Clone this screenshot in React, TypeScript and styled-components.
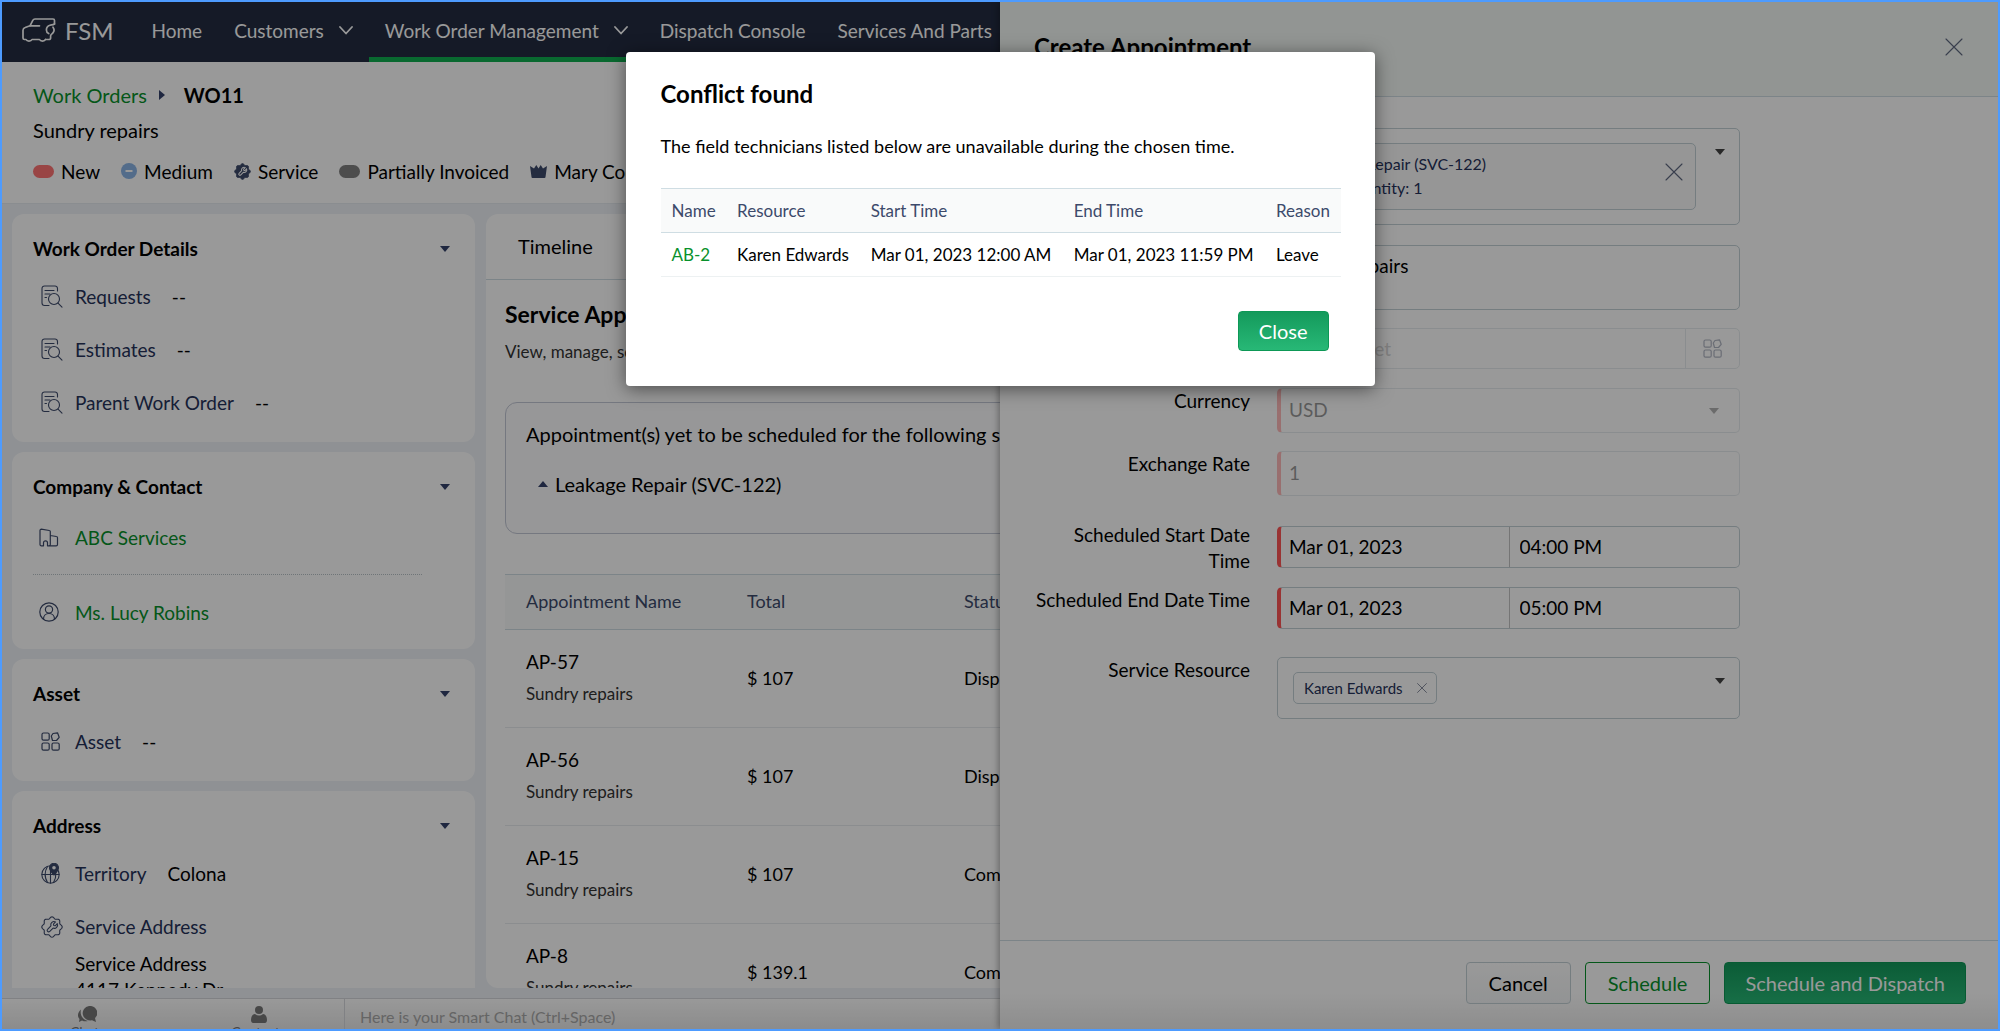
import React from "react";
import styled, { createGlobalStyle } from "styled-components";

const c = {
  ink: "#000",
  navy: "#26325a",
  slate: "#3d4a6b",
  green: "#08912b",
  line: "#cfdde3",
  white: "#fff",
};

const Global = createGlobalStyle`
  * { box-sizing: border-box; }
  body { margin: 0; font-family: Lato, "Liberation Sans", sans-serif; font-size: 19px; color: ${c.ink}; }
  button, input, select, textarea { font: inherit; color: inherit; margin: 0; }
  h1, h2, h3, p { margin: 0; }
  a { text-decoration: none; color: ${c.green}; }
`;

const Shell = styled.div`
  position: relative;
  display: flex;
  flex-direction: column;
  height: 100vh;
  overflow: hidden;
  border: 2px solid #4d9bff;
  background: #eef2f7;
`;

/* ---------- top navigation ---------- */
const Nav = styled.nav`
  display: flex;
  flex: none;
  height: 60px;
  background: #232c42;
  color: ${c.white};
  white-space: nowrap;
`;
const Brand = styled.div`
  display: flex;
  align-items: center;
  gap: 9px;
  padding: 0 22px 4px 20px;
  font-size: 24px;
`;
const NavItem = styled.a<{ $active?: boolean }>`
  display: flex;
  align-items: center;
  gap: 15px;
  padding: 0 16px 4px;
  font-size: 19px;
  color: ${c.white};
  box-shadow: ${(p) => (p.$active ? "inset 0 -5px 0 #10b050" : "none")};
`;

/* ---------- record header ---------- */
const RecordHeader = styled.header`
  flex: none;
  height: 142px;
  padding: 19px 31px 0;
  background: ${c.white};
  border-bottom: 1px solid #e6ebf1;
`;
const Crumbs = styled.div`
  display: flex;
  align-items: center;
  gap: 12px;
  height: 28px;
  font-size: 20px;
`;
const CrumbTitle = styled.h1`
  padding-left: 7px;
  font-size: 20px;
  font-weight: 700;
`;
const Summary = styled.p`
  height: 43px;
  font-size: 20px;
  line-height: 43px;
`;
const Statuses = styled.div`
  display: flex;
  align-items: center;
  gap: 21px;
  height: 38px;
  font-size: 19px;
  white-space: nowrap;
`;
const Status = styled.span`
  display: flex;
  align-items: center;
  gap: 7px;
`;
const Pill = styled.i<{ $color: string }>`
  width: 21px;
  height: 13px;
  border-radius: 7px;
  background: ${(p) => p.$color};
`;

/* ---------- body ---------- */
const Body = styled.main`
  display: flex;
  flex: 1;
  gap: 11px;
  min-height: 0;
  padding: 10px;
  overflow: hidden;
`;
const Side = styled.aside`
  display: flex;
  flex: 0 0 463px;
  flex-direction: column;
  gap: 10px;
  overflow: hidden;
`;
const Card = styled.section<{ $bottom?: number }>`
  flex: none;
  padding: 14px 21px ${(p) => p.$bottom ?? 13}px;
  border-radius: 12px;
  background: ${c.white};
`;
const CardHead = styled.div`
  display: flex;
  align-items: center;
  justify-content: space-between;
  height: 42px;
  padding-right: 4px;
`;
const CardTitle = styled.h2`
  font-size: 19px;
  font-weight: 700;
  line-height: 24px;
`;
const Row = styled.div<{ $h?: number }>`
  display: flex;
  align-items: center;
  height: ${(p) => p.$h ?? 53}px;
`;
const RowIcon = styled.span<{ $inset?: number }>`
  display: flex;
  align-items: center;
  flex: 0 0 42px;
  height: 26px;
  padding-left: ${(p) => p.$inset ?? 8}px;
`;
const RowLabel = styled.span`
  padding-right: 21px;
  color: ${c.navy};
`;
const Dotted = styled.hr`
  width: 389px;
  max-width: 100%;
  height: 0;
  margin: 8px 0;
  border: 0;
  border-top: 1px dotted #b9c4c8;
`;
const AddressRow = styled.div`
  display: flex;
  align-items: flex-start;
  padding-top: 14px;
`;
const AddressText = styled.div`
  line-height: 26px;
`;
const AddressLabel = styled.div`
  padding-bottom: 11px;
  color: ${c.navy};
`;

const Content = styled.section`
  flex: 1;
  min-width: 0;
  overflow: hidden;
  border-radius: 12px;
  background: ${c.white};
`;
const Tabs = styled.div`
  display: flex;
  height: 66px;
  padding: 0 32px;
  border-bottom: 1px solid ${c.line};
`;
const Tab = styled.button`
  padding: 0 0 2px;
  border: 0;
  background: none;
  font-size: 20px;
`;
const Panel = styled.div`
  padding: 20px 19px 0;
  white-space: nowrap;
`;
const PanelTitle = styled.h2`
  font-size: 23px;
  font-weight: 700;
  line-height: 28px;
`;
const PanelHint = styled.p`
  padding: 12px 0 0;
  font-size: 17px;
  line-height: 24px;
  color: #333;
`;
const Notice = styled.div`
  height: 132px;
  margin: 38px 0 40px;
  padding: 18px 20px;
  border: 1px solid #c3c8d6;
  border-radius: 12px;
  background: #fcfcfd;
  font-size: 20px;
  line-height: 26px;
`;
const NoticeItem = styled.div`
  display: flex;
  align-items: center;
  gap: 7px;
  padding: 24px 0 0 12px;
`;
const Table = styled.table`
  width: 100%;
  table-layout: fixed;
  border-collapse: collapse;
  text-align: left;
  th {
    height: 55px;
    padding: 0 0 2px 21px;
    border: solid ${c.line};
    border-width: 1px 0;
    background: #f8fafa;
    color: ${c.slate};
    font-size: 18px;
    font-weight: 400;
  }
  td {
    height: 98px;
    padding: 0 0 2px 21px;
    border-bottom: 1px solid #e8ebee;
    font-size: 18px;
  }
`;
const ApptName = styled.div`
  font-size: 19px;
  line-height: 32px;
`;
const ApptNote = styled.div`
  color: #333;
  font-size: 17px;
  line-height: 32px;
`;

/* ---------- chat bar ---------- */
const ChatBar = styled.footer`
  display: flex;
  flex: none;
  height: 31px;
  overflow: hidden;
  border-top: 1px solid #d5d8dc;
  background: linear-gradient(#ffffff, #e9e9e9);
`;
const ChatTabs = styled.div`
  display: grid;
  grid-template-columns: 1fr 1fr;
  flex: 0 0 343px;
  border-right: 1px solid #d5d8dc;
`;
const ChatTab = styled.button`
  display: flex;
  flex-direction: column;
  align-items: center;
  height: 44px;
  padding: 7px 0 0;
  border: 0;
  background: none;
  color: #777;
  font-size: 14px;
  line-height: 18px;
`;
const ChatInput = styled.input`
  flex: 1;
  padding: 4px 15px 0;
  border: 0;
  background: none;
  font-size: 16px;
  &::placeholder { color: #a8a8a8; opacity: 1; }
`;

/* ---------- drawer ---------- */
const Drawer = styled.aside`
  position: absolute;
  top: 0;
  right: 0;
  bottom: 0;
  display: flex;
  flex-direction: column;
  width: 50%;
  background: ${c.white};
  box-shadow: -2px 0 6px rgba(0, 0, 0, 0.3);
`;
const DrawerHead = styled.div`
  display: flex;
  align-items: center;
  justify-content: space-between;
  flex: none;
  height: 95px;
  padding: 0 35px 5px 34px;
  border-bottom: 1px solid ${c.line};
  background: #f4f8f6;
`;
const DrawerTitle = styled.h2`
  font-size: 24px;
  font-weight: 700;
`;
const IconButton = styled.button<{ $top?: number }>`
  display: flex;
  padding: ${(p) => p.$top ?? 0}px 0 0;
  border: 0;
  background: none;
`;
const Form = styled.form`
  flex: 1;
  min-height: 0;
  padding: 0 34px;
`;
const Field = styled.div<{ $top: number; $wrap?: boolean }>`
  display: grid;
  grid-template-columns: 216px minmax(0, 463px);
  align-items: start;
  column-gap: 27px;
  margin-top: ${(p) => p.$top}px;
  label, .label {
    font-size: 19px;
    line-height: 26px;
    text-align: right;
  }
  > :last-child { margin-top: ${(p) => (p.$wrap ? 4 : 0)}px; }
`;
const boxed = `
  border: 1px solid #c3d0d6;
  border-radius: 5px;
  background: ${c.white};
`;
const PickBox = styled.div`
  display: flex;
  align-items: flex-start;
  justify-content: space-between;
  ${boxed}
  padding: 14px 14px 14px 15px;
`;
const PickCaret = styled.button`
  display: flex;
  padding: 6px 0 0;
  border: 0;
  background: none;
`;
const ServiceChip = styled.div`
  display: flex;
  align-items: flex-start;
  justify-content: space-between;
  flex: 0 1 403px;
  height: 67px;
  padding: 8px 12px 0 11px;
  border: 1px solid #c3d0d6;
  border-radius: 5px;
  background: #fafbfb;
  color: ${c.navy};
  font-size: 16px;
  line-height: 24px;
`;
const Chip = styled.span`
  display: flex;
  align-items: center;
  gap: 14px;
  height: 32px;
  padding: 0 9px 1px 10px;
  border: 1px solid #c3d0d6;
  border-radius: 5px;
  color: ${c.navy};
  font-size: 15px;
`;
const TextArea = styled.textarea`
  ${boxed}
  display: block;
  width: 100%;
  height: 65px;
  padding: 7px 11px;
  resize: none;
  font-size: 19px;
  line-height: 26px;
`;
const Lookup = styled.div`
  display: flex;
  height: 41px;
  ${boxed}
  opacity: 0.4;
  input {
    flex: 1;
    min-width: 0;
    padding: 0 12px;
    border: 0;
    background: none;
    font-size: 19px;
  }
  input::placeholder { color: #999; opacity: 1; }
  button {
    display: flex;
    align-items: center;
    justify-content: center;
    width: 54px;
    padding: 0;
    border: 0;
    border-left: 1px solid #c3d0d6;
    background: none;
  }
`;
const Required = styled.div<{ $disabled?: boolean; $h: number }>`
  display: flex;
  align-items: center;
  height: ${(p) => p.$h}px;
  ${boxed}
  border-left: 4px solid #ff5555;
  opacity: ${(p) => (p.$disabled ? 0.4 : 1)};
  input, select {
    flex: 1;
    width: 50%;
    min-width: 0;
    height: 100%;
    padding: 0 8px 2px;
    border: 0;
    border-radius: 0;
    background: none;
    font-size: 19px;
    appearance: none;
    opacity: 1;
    color: inherit;
  }
  input + input { border-left: 1px solid #c3c3c3; padding-left: 10px; }
  > svg { margin-right: 20px; }
`;
const DrawerFoot = styled.div`
  display: flex;
  justify-content: flex-end;
  gap: 14px;
  flex: none;
  height: 89px;
  padding: 21px 32px 0;
  border-top: 1px solid ${c.line};
  background: linear-gradient(#fff 60%, #ececec);
`;
const Button = styled.button<{ $kind?: "primary" | "outline"; $compact?: boolean }>`
  height: ${(p) => (p.$compact ? 40 : 42)}px;
  padding: 0 ${(p) => (p.$kind === "primary" ? 20 : 22)}px 1px;
  border: 1px solid
    ${(p) => (p.$kind === "primary" ? "#0d9856" : p.$kind === "outline" ? c.green : "#c3d0d6")};
  border-radius: 4px;
  background: ${(p) =>
    p.$kind === "primary"
      ? "linear-gradient(#149a5c, #27b876)"
      : p.$kind === "outline"
        ? "#fff"
        : "linear-gradient(#fff, #f4f6f7)"};
  color: ${(p) => (p.$kind === "primary" ? "#fff" : p.$kind === "outline" ? c.green : c.ink)};
  font-size: 20px;
`;

/* ---------- modal ---------- */
const Overlay = styled.div`
  position: absolute;
  inset: 0;
  display: flex;
  align-items: flex-start;
  justify-content: center;
  padding-top: 50px;
  background: rgba(0, 0, 0, 0.4);
`;
const Dialog = styled.div`
  width: 749px;
  max-width: 100%;
  padding: 27px 34px 35px 35px;
  border-radius: 4px;
  background: ${c.white};
  box-shadow: 0 3px 18px rgba(0, 0, 0, 0.5);
`;
const DialogTitle = styled.h2`
  font-size: 24px;
  font-weight: 700;
  line-height: 30px;
`;
const DialogText = styled.p`
  padding: 24px 0 29px;
  font-size: 18px;
  line-height: 26px;
`;
const ConflictTable = styled.table`
  width: 100%;
  border-collapse: collapse;
  text-align: left;
  white-space: nowrap;
  th, td { height: 44px; padding: 0 10px 0 11px; font-weight: 400; font-size: 17px; }
  th { border: solid ${c.line}; border-width: 1px 0; background: #f9fafa; color: ${c.slate}; }
  td { border-bottom: 1px solid #edf1f2; }
`;
const DialogActions = styled.div`
  display: flex;
  justify-content: flex-end;
  padding: 34px 12px 0 0;
`;

/* ---------- icons ---------- */
const Svg = ({ w = 20, h = w, box = "0 0 20 20", color = c.slate, sw = 1.2, children }: any) => (
  <svg width={w} height={h} viewBox={box} fill="none" stroke={color} strokeWidth={sw} strokeLinecap="round" strokeLinejoin="round" aria-hidden="true">
    {children}
  </svg>
);
const Caret = ({ up, color = "#35426b" }: { up?: boolean; color?: string }) => (
  <svg width="10" height="6" viewBox="0 0 10 6" fill={color} aria-hidden="true">
    <path d={up ? "M0 6L5 0l5 6z" : "M0 0h10L5 6z"} />
  </svg>
);
const Cross = ({ size }: { size: number }) => (
  <Svg w={size} box="0 0 18 18" sw={size < 12 ? 1.6 : 1.1} color={size < 12 ? "#7a8194" : "#5f6880"}>
    <path d="M1 1l16 16M17 1L1 17" />
  </Svg>
);
const Chevron = () => (
  <Svg w={14} h={9} box="0 0 14 9" color="#fff" sw={1.8}>
    <path d="M1 1l6 6.500l6-6.500" />
  </Svg>
);
const Truck = () => (
  <Svg w={34} h={25} box="0 0 34 25" color="#fff" sw={1.7}>
    <path d="M32.500 6V2.500A1.500 1.500 0 0 0 31 1H13a2.500 2.500 0 0 0-2.200 1.300L8 7.800 3.200 9.500A3 3 0 0 0 1 12.300V20a1.500 1.500 0 0 0 1.500 1.500H4a3.200 2.500 0 0 0 6 0h7.500a3.200 2.500 0 0 0 6 0" />
    <path d="M8 7.800h9.500" />
    <path d="M32.500 6c-1.500 1-3 .8-4.500 1.200a5 5 0 0 0-3.600 4.800c0 1.800 1 3 2.300 3.600M31 9.200c1.200 1.600 1.300 3.800.2 5.400-1 1.400-2.400 1.500-2.600 3.200V20a1.500 1.500 0 0 1-1.500 1.500h-3.600" />
  </Svg>
);
const DocSearch = () => (
  <Svg w={22} h={23} box="0 0 22 23" sw={1.1}>
    <path d="M8 20.500H3.500a2.500 2.500 0 0 1-2.500-2.500V3.500A2.500 2.500 0 0 1 3.500 1H14a2.500 2.500 0 0 1 2.500 2.500V6M4 5.500h9M4 9h5M4 12.500h1.500" />
    <circle cx="13" cy="14" r="5.500" />
    <path d="M17 18.200l4 4" />
  </Svg>
);
const Building = () => (
  <Svg w={20} h={19} box="0 0 20 19">
    <path d="M1 16.500V2.500a1.300 1.300 0 0 1 1.300-1.300l8 1.300a1 1 0 0 1 1 1v13a1.300 1.300 0 0 1-1.300 1.300H8.500v-3a2 2 0 0 0-4 0v3H2.300A1.300 1.300 0 0 1 1 16.500zM11.300 7.500l6 1a1.300 1.300 0 0 1 1.200 1.300v6.700a1.300 1.300 0 0 1-1.300 1.300H10" />
  </Svg>
);
const Person = () => (
  <Svg>
    <circle cx="10" cy="10" r="9.200" />
    <circle cx="10" cy="7.500" r="3.600" />
    <path d="M4.500 17c0-3 2-5.500 5.500-5.500s5.500 2.500 5.500 5.500" />
  </Svg>
);
const AssetIcon = () => (
  <Svg w={19} box="0 0 19 19">
    <rect x="1" y="1" width="7.200" height="7.200" rx="1.500" />
    <path d="M12 1.500l4.500-.7 1.700 4.500-2.700 3.200h-4L10.300 4z" />
    <rect x="1" y="11" width="7.200" height="7.200" rx="1.500" />
    <rect x="11" y="11" width="7.200" height="7.200" rx="1.500" />
  </Svg>
);
const Globe = () => (
  <Svg w={20} h={21} box="0 0 20 21" sw={1.1}>
    <circle cx="9.500" cy="11.500" r="8.700" />
    <path d="M9.500 3v17M1 11.500h17M6.500 3.500c-3 5-3 11 0 16M12.500 19.500c2-3 2.500-6 2.300-9" />
    <path d="M13 12c-3.500-3.500-4.500-5-4.500-7.200a4.500 4.500 0 0 1 9 0c0 2.200-1 3.700-4.500 7.200z" fill={c.slate} />
    <circle cx="13" cy="4.700" r="1.800" fill="#fff" stroke="none" />
  </Svg>
);

// Scalloped gear rim with eight rounded teeth, centred in a 20×20 box.
const gearPath = (() => {
  const points: string[] = [];
  for (let i = 0; i < 96; i++) {
    const a = (i / 96) * Math.PI * 2;
    const r = 8.5 + 0.8 * Math.cos(a * 8);
    points.push(`${(10 + r * Math.sin(a)).toFixed(2)} ${(10 - r * Math.cos(a)).toFixed(2)}`);
  }
  return `M${points.join("L")}Z`;
})();
const wrenchPath =
  "M6 14a1.300 1.300 0 0 1 0-1.900L9 9a3 3 0 0 1 4.200-3.600L11.300 7.300l.3 1.300 1.300.3 1.900-1.900A3 3 0 0 1 11 11L8 14a1.400 1.400 0 0 1-2 0z";
const GearOutline = () => (
  <Svg w={22} sw={1}>
    <path d={gearPath} />
    <path d={wrenchPath} />
  </Svg>
);
const GearSolid = () => (
  <svg width="17" height="17" viewBox="0 0 20 20" aria-hidden="true">
    <path d={gearPath} fill={c.slate} stroke={c.slate} />
    <path d={wrenchPath} fill={c.slate} stroke="#fff" strokeWidth="1.200" />
  </svg>
);
const Minus = () => (
  <svg width="16" height="16" viewBox="0 0 16 16" aria-hidden="true">
    <circle cx="8" cy="8" r="8" fill="#8ab4e6" />
    <path d="M4.500 8h7" stroke="#fff" strokeWidth="2" />
  </svg>
);
const Crown = () => (
  <svg width="17" height="14" viewBox="0 0 17 14" fill={c.slate} aria-hidden="true">
    <path d="M0 2l4 2.500L6.300 1 8.500 4.500 10.700 1 13 4.500 17 2l-1.500 11a1 1 0 0 1-1 1h-12a1 1 0 0 1-1-1z" />
  </svg>
);
const ChatIcon = () => (
  <svg width="19" height="17" viewBox="0 0 19 17" fill="#777" aria-hidden="true">
    <path d="M11 0a7.500 7 0 0 1 6 12l1 4-4-1.700A7.500 7 0 1 1 11 0z" />
    <path d="M3 3.500C-1 7-.5 11 1.500 13L1 16l3-1.500c2 1 4 1 6 .5C5 14 1.500 9 3 3.500z" />
  </svg>
);
const ContactIcon = () => (
  <svg width="16" height="17" viewBox="0 0 16 17" fill="#777" aria-hidden="true">
    <circle cx="8" cy="4" r="4" />
    <path d="M0 14c0-4 2-6 4-6 2.500 2 5.500 2 8 0 2 0 4 2 4 6 0 2-1 3-2 3H2c-1 0-2-1-2-3z" />
  </svg>
);

const appointments = [
  ["AP-57", "$ 107", "Dispatched"],
  ["AP-56", "$ 107", "Dispatched"],
  ["AP-15", "$ 107", "Completed"],
  ["AP-8", "$ 139.1", "Completed"],
];

function SideCard({ title, bottom, children }: { title: string; bottom?: number; children: React.ReactNode }) {
  return (
    <Card $bottom={bottom}>
      <CardHead>
        <CardTitle>{title}</CardTitle>
        <IconButton aria-label={`Toggle ${title}`}><Caret /></IconButton>
      </CardHead>
      {children}
    </Card>
  );
}

export default function App() {
  return (
    <Shell>
      <Global />
      <Nav>
        <Brand><Truck />FSM</Brand>
        <NavItem href="#home">Home</NavItem>
        <NavItem href="#customers">Customers <Chevron /></NavItem>
        <NavItem href="#work-orders" $active>Work Order Management <Chevron /></NavItem>
        <NavItem href="#dispatch">Dispatch Console</NavItem>
        <NavItem href="#services">Services And Parts</NavItem>
      </Nav>

      <RecordHeader>
        <Crumbs>
          <a href="#work-orders">Work Orders</a>
          <svg width="6" height="10" viewBox="0 0 6 10" fill="#35426b" aria-hidden="true"><path d="M0 0l6 5-6 5z" /></svg>
          <CrumbTitle>WO11</CrumbTitle>
        </Crumbs>
        <Summary>Sundry repairs</Summary>
        <Statuses>
          <Status><Pill $color="#ff7373" />New</Status>
          <Status><Minus />Medium</Status>
          <Status><GearSolid />Service</Status>
          <Status><Pill $color="#808080" />Partially Invoiced</Status>
          <Status><Crown />Mary Cooper</Status>
        </Statuses>
      </RecordHeader>

      <Body>
        <Side>
          <SideCard title="Work Order Details">
            {["Requests", "Estimates", "Parent Work Order"].map((name) => (
              <Row key={name}><RowIcon><DocSearch /></RowIcon><RowLabel>{name}</RowLabel>--</Row>
            ))}
          </SideCard>
          <SideCard title="Company &amp; Contact" bottom={8}>
            <Row $h={58}><RowIcon $inset={6}><Building /></RowIcon><a href="#company">ABC Services</a></Row>
            <Dotted />
            <Row $h={58}><RowIcon $inset={6}><Person /></RowIcon><a href="#contact">Ms. Lucy Robins</a></Row>
          </SideCard>
          <SideCard title="Asset">
            <Row><RowIcon><AssetIcon /></RowIcon><RowLabel>Asset</RowLabel>--</Row>
          </SideCard>
          <SideCard title="Address">
            <Row><RowIcon><Globe /></RowIcon><RowLabel>Territory</RowLabel>Colona</Row>
            <AddressRow>
              <RowIcon><GearOutline /></RowIcon>
              <AddressText>
                <AddressLabel>Service Address</AddressLabel>
                <div>Service Address</div>
                <div>4117 Kennedy Dr</div>
              </AddressText>
            </AddressRow>
          </SideCard>
        </Side>

        <Content>
          <Tabs><Tab>Timeline</Tab></Tabs>
          <Panel>
            <PanelTitle>Service Appointments</PanelTitle>
            <PanelHint>View, manage, schedule appointments</PanelHint>
            <Notice>
              <div>Appointment(s) yet to be scheduled for the following services</div>
              <NoticeItem><Caret up />Leakage Repair (SVC-122)</NoticeItem>
            </Notice>
            <Table>
              <colgroup><col style={{ width: 221 }} /><col style={{ width: 217 }} /><col /></colgroup>
              <thead><tr><th>Appointment Name</th><th>Total</th><th>Status</th></tr></thead>
              <tbody>
                {appointments.map(([name, total, status]) => (
                  <tr key={name}>
                    <td><ApptName>{name}</ApptName><ApptNote>Sundry repairs</ApptNote></td>
                    <td>{total}</td>
                    <td>{status}</td>
                  </tr>
                ))}
              </tbody>
            </Table>
          </Panel>
        </Content>
      </Body>

      <ChatBar>
        <ChatTabs>
          <ChatTab><ChatIcon />Chats</ChatTab>
          <ChatTab><ContactIcon />Contacts</ChatTab>
        </ChatTabs>
        <ChatInput aria-label="Smart Chat" placeholder="Here is your Smart Chat (Ctrl+Space)" />
      </ChatBar>

      <Drawer>
        <DrawerHead>
          <DrawerTitle>Create Appointment</DrawerTitle>
          <IconButton aria-label="Close panel"><Cross size={18} /></IconButton>
        </DrawerHead>
        <Form>
          <Field $top={31}>
            <span className="label">Services And Parts</span>
            <PickBox>
              <ServiceChip>
                <div><div>Leakage Repair (SVC-122)</div><div>Total Quantity: 1</div></div>
                <IconButton type="button" aria-label="Remove service" $top={11}><Cross size={18} /></IconButton>
              </ServiceChip>
              <PickCaret type="button" aria-label="Open services"><Caret color="#444" /></PickCaret>
            </PickBox>
          </Field>
          <Field $top={20}>
            <label htmlFor="summary">Summary</label>
            <TextArea id="summary" defaultValue="Sundry repairs" />
          </Field>
          <Field $top={18}>
            <label htmlFor="asset">Asset</label>
            <Lookup>
              <input id="asset" placeholder="Select Asset" disabled />
              <button type="button" aria-label="Browse assets" disabled><AssetIcon /></button>
            </Lookup>
          </Field>
          <Field $top={19}>
            <label htmlFor="currency">Currency</label>
            <Required $h={45} $disabled>
              <select id="currency" disabled><option>USD</option></select>
              <Caret color="#444" />
            </Required>
          </Field>
          <Field $top={18}>
            <label htmlFor="rate">Exchange Rate</label>
            <Required $h={45} $disabled><input id="rate" defaultValue="1" disabled /></Required>
          </Field>
          <Field $top={26} $wrap>
            <label htmlFor="start">Scheduled Start Date Time</label>
            <Required $h={42}>
              <input id="start" defaultValue="Mar 01, 2023" />
              <input aria-label="Start time" defaultValue="04:00 PM" />
            </Required>
          </Field>
          <Field $top={13}>
            <label htmlFor="end">Scheduled End Date Time</label>
            <Required $h={42}>
              <input id="end" defaultValue="Mar 01, 2023" />
              <input aria-label="End time" defaultValue="05:00 PM" />
            </Required>
          </Field>
          <Field $top={28}>
            <span className="label">Service Resource</span>
            <PickBox>
              <Chip>Karen Edwards<IconButton type="button" aria-label="Remove Karen Edwards"><Cross size={10} /></IconButton></Chip>
              <PickCaret type="button" aria-label="Open resources"><Caret color="#444" /></PickCaret>
            </PickBox>
          </Field>
        </Form>
        <DrawerFoot>
          <Button>Cancel</Button>
          <Button $kind="outline">Schedule</Button>
          <Button $kind="primary">Schedule and Dispatch</Button>
        </DrawerFoot>
      </Drawer>

      <Overlay>
        <Dialog role="dialog" aria-modal="true" aria-labelledby="conflict-title">
          <DialogTitle id="conflict-title">Conflict found</DialogTitle>
          <DialogText>The field technicians listed below are unavailable during the chosen time.</DialogText>
          <ConflictTable>
            <thead>
              <tr><th>Name</th><th>Resource</th><th>Start Time</th><th>End Time</th><th>Reason</th></tr>
            </thead>
            <tbody>
              <tr>
                <td><a href="#ab-2">AB-2</a></td>
                <td>Karen Edwards</td>
                <td>Mar 01, 2023 12:00 AM</td>
                <td>Mar 01, 2023 11:59 PM</td>
                <td>Leave</td>
              </tr>
            </tbody>
          </ConflictTable>
          <DialogActions><Button $kind="primary" $compact>Close</Button></DialogActions>
        </Dialog>
      </Overlay>
    </Shell>
  );
}
